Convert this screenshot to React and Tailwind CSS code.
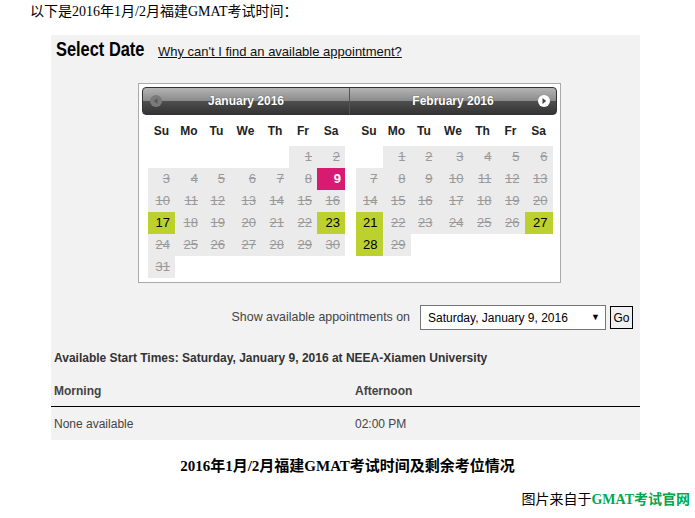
import React from "react";

const cols = "grid grid-cols-[27px_28px_27px_31px_28px_28px_28px]";
const names = ["Su", "Mo", "Tu", "We", "Th", "Fr", "Sa"];

const jan = [
  [null, null, null, null, null, 1, 2],
  [3, 4, 5, 6, 7, 8, 9],
  [10, 11, 12, 13, 14, 15, 16],
  [17, 18, 19, 20, 21, 22, 23],
  [24, 25, 26, 27, 28, 29, 30],
  [31, null, null, null, null, null, null],
];
const feb = [
  [null, 1, 2, 3, 4, 5, 6],
  [7, 8, 9, 10, 11, 12, 13],
  [14, 15, 16, 17, 18, 19, 20],
  [21, 22, 23, 24, 25, 26, 27],
  [28, 29, null, null, null, null, null],
];

function Cell({ d, avail, sel }) {
  if (d === null) return <div className="h-[22px] bg-white" />;
  if (sel)
    return (
      <div className="h-[22px] bg-[#d81b72] text-white font-bold text-[13px] flex items-center justify-end pr-[4px]">
        {d}
      </div>
    );
  if (avail)
    return (
      <div className="h-[22px] bg-[#bcd12e] text-black text-[13px] flex items-center justify-end pr-[5px]">
        {d}
      </div>
    );
  return (
    <div className="h-[22px] bg-[#ebebeb] text-[#9a9a9a] text-[13px] line-through flex items-center justify-end pr-[5px]">
      {d}
    </div>
  );
}

function Month({ rows, avail, sel }) {
  return (
    <div className="w-[208px] pl-[6px]">
      <div className={cols + " h-[31px] items-center"}>
        {names.map((n) => (
          <div key={n} className="text-center font-bold text-[12px] text-[#222]">
            {n}
          </div>
        ))}
      </div>
      <div className="flex flex-col">
        {rows.map((r, i) => (
          <div key={i} className={cols}>
            {r.map((d, j) => (
              <Cell key={j} d={d} avail={avail.includes(d)} sel={d === sel} />
            ))}
          </div>
        ))}
      </div>
    </div>
  );
}

export default function App() {
  return (
    <div
      className="w-[695px] h-[518px] bg-white overflow-hidden text-[#222]"
      style={{ fontFamily: '"Liberation Sans", Arial, sans-serif' }}
    >
      <p
        className="pl-[30px] pt-[4px] text-[14px] leading-[16px] text-black"
        style={{ fontFamily: '"Liberation Serif", "Noto Sans CJK SC", serif' }}
      >
        以下是2016年1月/2月福建GMAT考试时间：
      </p>

      <div className="ml-[51px] mt-[15px] w-[589px] h-[405px] bg-[#f2f2f2] flex flex-col">
        <div className="flex items-baseline pl-[5px] pt-[2px] h-[26px]">
          <span className="w-[84px] inline-block whitespace-nowrap">
            <span className="inline-block origin-left scale-x-[0.82] font-bold text-[20px] leading-[24px] text-black">
              Select Date
            </span>
          </span>
          <a className="ml-[18px] text-[13px] underline text-[#111]">
            Why can't I find an available appointment?
          </a>
        </div>

        <div className="ml-[87px] mt-[22px] w-[423px] h-[200px] bg-white border border-[#aaa] p-[3px]">
          <div className="flex h-[28px] rounded-[4px] border border-[#333] bg-[linear-gradient(to_bottom,#b4b4b4_0%,#8c8c8c_48%,#4e4e4e_52%,#333_100%)] overflow-hidden">
            <div className="w-[207px] flex items-center relative border-r border-[#555]">
              <svg className="absolute left-[7px] top-[7px]" width="12" height="12" viewBox="0 0 12 12">
                <circle cx="6" cy="6" r="6" fill="#7a7a7a" />
                <path d="M7.5 3 L3.8 6 L7.5 9 Z" fill="#5a5a5a" />
              </svg>
              <span className="w-full text-center text-white font-bold text-[12px] [text-shadow:0_0_1px_#333]">
                January 2016
              </span>
            </div>
            <div className="flex-1 flex items-center relative">
              <span className="w-full text-center text-white font-bold text-[12px] [text-shadow:0_0_1px_#333]">
                February 2016
              </span>
              <svg className="absolute right-[6px] top-[7px]" width="12" height="12" viewBox="0 0 12 12">
                <circle cx="6" cy="6" r="6" fill="#fff" />
                <path d="M4.5 3 L8.2 6 L4.5 9 Z" fill="#444" />
              </svg>
            </div>
          </div>
          <div className="flex">
            <Month rows={jan} avail={[17, 23]} sel={9} />
            <Month rows={feb} avail={[21, 27, 28]} sel={null} />
          </div>
        </div>

        <div className="mt-[22px] flex items-center justify-end pr-[7px]">
          <span className="text-[12.4px] text-[#444]">Show available appointments on</span>
          <div className="ml-[10px] w-[186px] h-[25px] bg-white border border-[#767676] flex items-center justify-between pl-[7px] pr-[5px]">
            <span className="text-[12px] text-black">Saturday, January 9, 2016</span>
            <span className="text-[9px] text-black">▼</span>
          </div>
          <div className="ml-[4px] w-[23px] h-[23px] border border-black bg-[#f0f0f0] flex items-center justify-center text-[12px] text-black">
            Go
          </div>
        </div>

        <div className="mt-[20px] pl-[3px] text-[12px] leading-[16px] font-bold text-[#333]">
          Available Start Times: Saturday, January 9, 2016 at NEEA-Xiamen University
        </div>

        <div className="mt-[17px] grid grid-cols-[301px_1fr] pl-[3px] pb-[7px] border-b border-black text-[12px] leading-[16px] font-bold text-[#444]">
          <span>Morning</span>
          <span>Afternoon</span>
        </div>
        <div className="mt-[9px] grid grid-cols-[301px_1fr] pl-[3px] text-[12px] leading-[16px] text-[#444]">
          <span>None available</span>
          <span>02:00 PM</span>
        </div>
      </div>

      <p
        className="mt-[17px] text-center font-bold text-[15px] leading-[18px] text-black"
        style={{ fontFamily: '"Liberation Serif", "Noto Sans CJK SC", serif' }}
      >
        2016年1月/2月福建GMAT考试时间及剩余考位情况
      </p>

      <p
        className="mt-[17px] text-right pr-[5px] text-[14px] leading-[16px] text-black"
        style={{ fontFamily: '"Liberation Serif", "Noto Sans CJK SC", serif' }}
      >
        图片来自于<span className="font-bold text-[#00a84f]">GMAT考试官网</span>
      </p>
    </div>
  );
}
